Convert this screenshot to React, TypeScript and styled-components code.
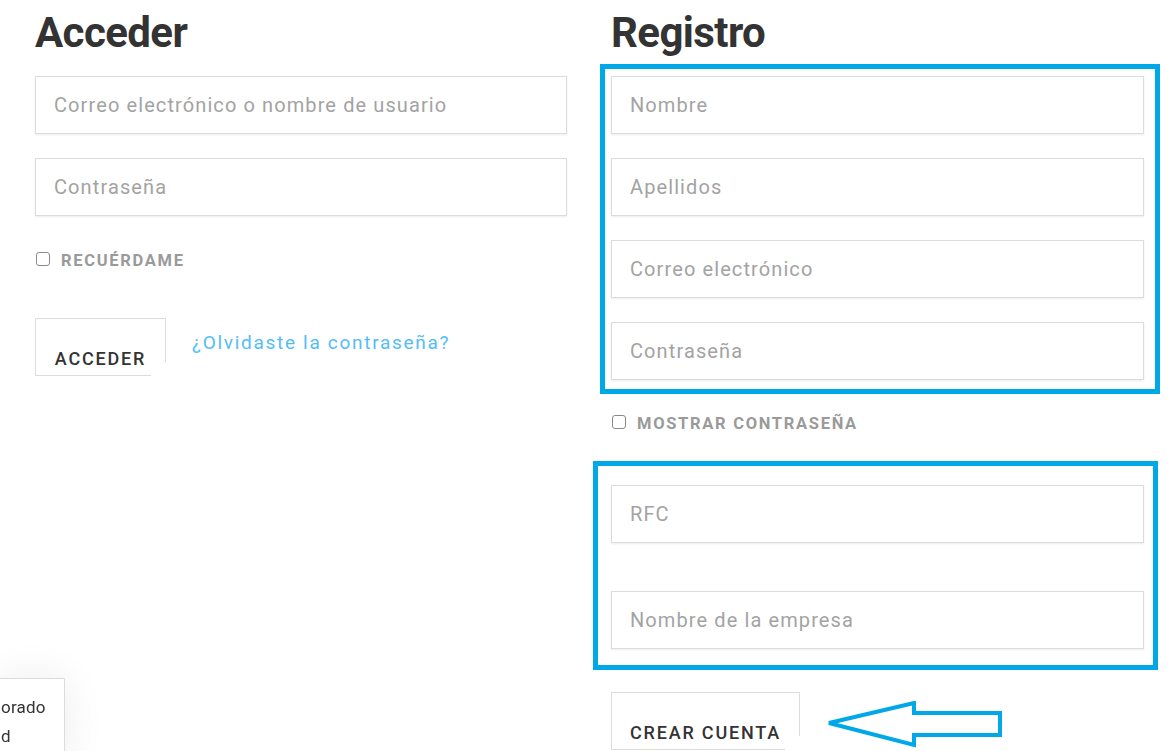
import React from "react";
import styled, { createGlobalStyle } from "styled-components";

const GlobalStyle = createGlobalStyle`
  html, body {
    margin: 0;
    padding: 0;
    background: #fff;
    overflow: hidden;
  }
  body {
    font-family: "Roboto", "Liberation Sans", sans-serif;
    color: #333;
  }
`;

const Page = styled.div`
  display: grid;
  grid-template-columns: 532px 533px;
  column-gap: 44px;
  padding: 0 0 0 35px;
  height: 751px;
  box-sizing: border-box;
`;

const Column = styled.section`
  display: flex;
  flex-direction: column;
  align-items: flex-start;
`;

const Heading = styled.h2`
  margin: 0;
  padding-top: 1px;
  height: 64px;
  line-height: 64px;
  box-sizing: border-box;
  font-size: 42px;
  font-weight: 700;
  letter-spacing: -0.6px;
  color: #333;
`;

const Stack = styled.div<{ $gap: number; $top?: number }>`
  display: flex;
  flex-direction: column;
  gap: ${(p) => p.$gap}px;
  width: 100%;
  padding-top: ${(p) => p.$top ?? 0}px;
`;

const Highlight = styled.div<{ $pad: string; $margin: string; $gap: number }>`
  display: flex;
  flex-direction: column;
  gap: ${(p) => p.$gap}px;
  border: 5px solid #00a8e8;
  padding: ${(p) => p.$pad};
  margin: ${(p) => p.$margin};
  align-self: stretch;
`;

const Input = styled.input`
  display: block;
  width: 100%;
  height: 58px;
  box-sizing: border-box;
  border: 1px solid #dcdcdc;
  box-shadow: 0 1px 2px rgba(0, 0, 0, 0.08);
  padding: 0 18px;
  font-family: "Roboto", "Liberation Sans", sans-serif;
  font-size: 20px;
  letter-spacing: 1.1px;
  color: #333;
  background: #fff;
  outline: none;

  &::placeholder {
    color: #a3a3a3;
  }
`;

const CheckRow = styled.label<{ $top: number; $bottom: number }>`
  display: flex;
  align-items: center;
  gap: 11px;
  margin: ${(p) => p.$top}px 0 ${(p) => p.$bottom}px 1px;
  font-size: 16.5px;
  font-weight: 700;
  letter-spacing: 1.7px;
  color: #9a9a9a;
  text-transform: uppercase;
`;

const Box = styled.span`
  width: 12px;
  height: 12px;
  margin-top: -3px;
  border: 1.5px solid #8a8a8a;
  border-radius: 3px;
  background: #fff;
`;

const Actions = styled.div`
  display: flex;
  align-items: flex-start;
  gap: 26px;
`;

const Button = styled.button<{ $width: number }>`
  position: relative;
  width: ${(p) => p.$width}px;
  height: 58px;
  box-sizing: border-box;
  border: 1px solid #dcdcdc;
  background: #fff;
  padding: 22px 0 0;
  font-family: "Roboto", "Liberation Sans", sans-serif;
  font-size: 18px;
  font-weight: 500;
  letter-spacing: 1.8px;
  color: #333;
  text-transform: uppercase;
  text-align: center;

  &::after {
    content: "";
    position: absolute;
    right: -1px;
    bottom: -1px;
    width: 15px;
    height: 14px;
    background: #fff;
  }
`;

const Link = styled.a`
  margin-top: 13px;
  font-size: 19px;
  letter-spacing: 1.7px;
  color: #54bdf6;
  text-decoration: none;
`;

const Footer = styled.div`
  display: flex;
  align-items: flex-start;
  gap: 26px;
  margin-top: 22px;
`;

const Arrow = styled.svg`
  margin-top: 9px;
  flex: none;
`;

const Notice = styled.div`
  position: fixed;
  left: -1px;
  top: 678px;
  width: 66px;
  height: 90px;
  box-sizing: border-box;
  border: 1px solid #dcdcdc;
  background: #fff;
  box-shadow: 0 0 40px rgba(0, 0, 0, 0.08);
  padding: 14px 0 0 1px;
  font-size: 17px;
  line-height: 29px;
  color: #333;
  letter-spacing: 0.2px;
`;

export default function App() {
  return (
    <>
      <GlobalStyle />
      <Page>
        <Column>
          <Heading>Acceder</Heading>
          <Stack $gap={24} $top={12}>
            <Input placeholder="Correo electrónico o nombre de usuario" />
            <Input type="password" placeholder="Contraseña" />
          </Stack>
          <CheckRow $top={35} $bottom={48}>
            <Box />
            Recuérdame
          </CheckRow>
          <Actions>
            <Button $width={131}>Acceder</Button>
            <Link href="#">¿Olvidaste la contraseña?</Link>
          </Actions>
        </Column>

        <Column>
          <Heading>Registro</Heading>
          <Highlight $gap={24} $pad="7px 11px 9px 6px" $margin="0 -16px 0 -11px">
            <Input placeholder="Nombre" />
            <Input placeholder="Apellidos" />
            <Input placeholder="Correo electrónico" />
            <Input type="password" placeholder="Contraseña" />
          </Highlight>
          <CheckRow $top={20} $bottom={28}>
            <Box />
            Mostrar contraseña
          </CheckRow>
          <Highlight $gap={48} $pad="19px 9px 16px 13px" $margin="0 -14px 0 -18px">
            <Input placeholder="RFC" />
            <Input placeholder="Nombre de la empresa" />
          </Highlight>
          <Footer>
            <Button $width={189}>Crear cuenta</Button>
            <Arrow width="176" height="48" viewBox="0 0 176 48">
              <path
                d="M3 22 L88 2 L88 12 L174 12 L174 34 L88 34 L88 44 Z"
                fill="none"
                stroke="#00a8e8"
                strokeWidth="4"
                strokeLinejoin="miter"
              />
            </Arrow>
          </Footer>
        </Column>
      </Page>
      <Notice>
        orado
        <br />d
      </Notice>
    </>
  );
}
